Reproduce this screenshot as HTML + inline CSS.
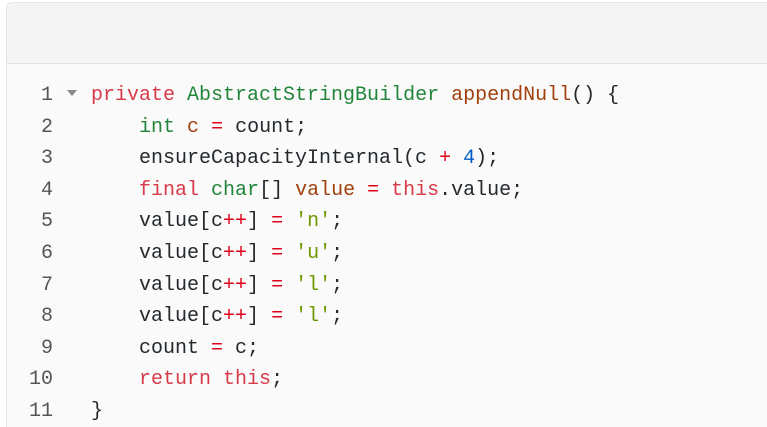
<!DOCTYPE html>
<html style="height:427px;overflow:hidden"><head><style>
body{margin:0;width:767px;height:427px;background:#fff;overflow:hidden;position:relative}
.card{position:absolute;left:6px;top:2px;width:780px;height:440px;border:1px solid #e6e6e6;border-radius:6px;background:#fafafa;box-sizing:border-box}
.hdr{height:60px;background:#f4f4f4;border-bottom:1px solid #e3e3e3;border-radius:6px 6px 0 0}
.code{position:absolute;left:0;top:80px;font-family:"Liberation Mono",monospace;font-size:20px;line-height:31.6px;color:#24292e;white-space:pre}
.ln{display:inline-block;width:53px;text-align:right;color:#555}
.ar{display:inline-block;width:38px;position:relative}
.k{color:#d73a49}.t{color:#22863a}.f{color:#a0410d}.o{color:#e0001a}.n{color:#005cc5}.s{color:#6a9a00}
.wrap{position:absolute;left:0;top:0;width:767px;height:427px;overflow:hidden}
</style></head><body>
<div class="wrap">
<div class="card"><div class="hdr"></div></div>
<div class="code"><span class="ln">1</span><span class="ar"><svg width="12" height="8" style="position:absolute;left:13px;top:-11px"><path d="M1 1 L11 1 L6 7 Z" fill="#888"/></svg></span><span class="k">private</span> <span class="t">AbstractStringBuilder</span> <span class="f">appendNull</span>() {
<span class="ln">2</span><span class="ar"></span>    <span class="t">int</span> <span class="f">c</span> <span class="o">=</span> count;
<span class="ln">3</span><span class="ar"></span>    ensureCapacityInternal(c <span class="o">+</span> <span class="n">4</span>);
<span class="ln">4</span><span class="ar"></span>    <span class="k">final</span> <span class="t">char</span>[] <span class="f">value</span> <span class="o">=</span> <span class="k">this</span>.value;
<span class="ln">5</span><span class="ar"></span>    value[c<span class="o">++</span>] <span class="o">=</span> <span class="s">'n'</span>;
<span class="ln">6</span><span class="ar"></span>    value[c<span class="o">++</span>] <span class="o">=</span> <span class="s">'u'</span>;
<span class="ln">7</span><span class="ar"></span>    value[c<span class="o">++</span>] <span class="o">=</span> <span class="s">'l'</span>;
<span class="ln">8</span><span class="ar"></span>    value[c<span class="o">++</span>] <span class="o">=</span> <span class="s">'l'</span>;
<span class="ln">9</span><span class="ar"></span>    count <span class="o">=</span> c;
<span class="ln">10</span><span class="ar"></span>    <span class="k">return</span> <span class="k">this</span>;
<span class="ln">11</span><span class="ar"></span>}</div>
</div>
</body></html>
